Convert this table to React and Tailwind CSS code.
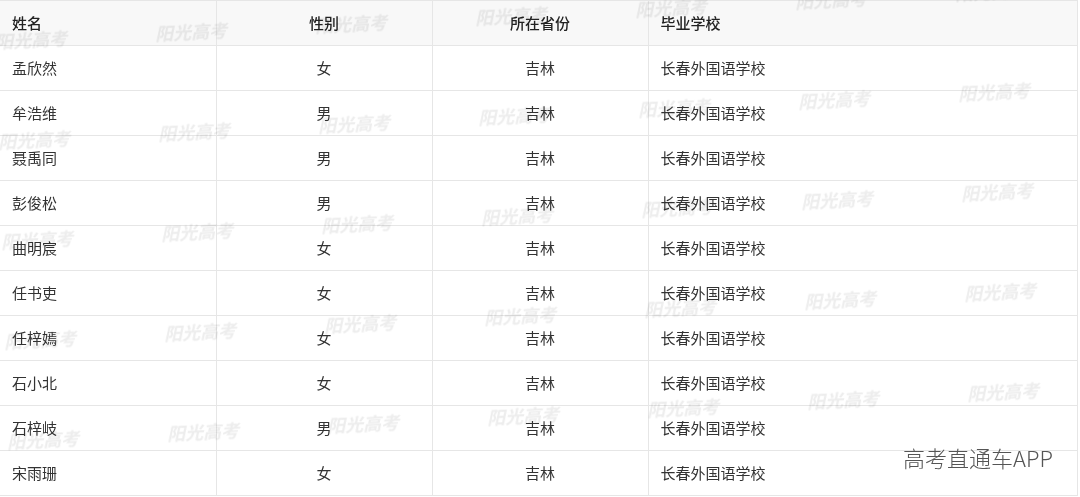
import React from 'react';

const rows = [
  ['孟欣然', '女'],
  ['牟浩维', '男'],
  ['聂禹同', '男'],
  ['彭俊松', '男'],
  ['曲明宸', '女'],
  ['任书吏', '女'],
  ['任梓嫣', '女'],
  ['石小北', '女'],
  ['石梓岐', '男'],
  ['宋雨珊', '女'],
];

// watermark grid: each column steps 160px right and 8px up, each row 100px down
const marks = [];
for (let j = 0; j < 5; j++) {
  for (let i = 0; i < 7; i++) {
    marks.push({ left: -5 + 160 * i + 3 * j, top: 26 + 100 * j - 8 * i });
  }
}

export default function App() {
  return (
    <div
      className="relative w-[1080px] h-[497px] overflow-hidden bg-white text-[#333]"
      style={{ fontFamily: '"Noto Sans CJK SC", "Noto Sans", sans-serif' }}
    >
      <table className="w-[1078px] border-collapse table-fixed text-[15px]">
        <colgroup>
          <col className="w-[216px]" />
          <col className="w-[216px]" />
          <col className="w-[216px]" />
          <col />
        </colgroup>
        <thead>
          <tr className="h-[45px] bg-[#f8f8f8] text-[#222]">
            <th className="border-t border-r border-b border-[#e6e6e6] px-3 text-left font-medium">姓名</th>
            <th className="border-t border-r border-b border-[#e6e6e6] text-center font-medium">性别</th>
            <th className="border-t border-r border-b border-[#e6e6e6] text-center font-medium">所在省份</th>
            <th className="border-t border-r border-b border-[#e6e6e6] px-3 text-left font-medium">毕业学校</th>
          </tr>
        </thead>
        <tbody>
          {rows.map(([name, sex]) => (
            <tr key={name} className="h-[45px]">
              <td className="border-r border-b border-[#e6e6e6] px-3">{name}</td>
              <td className="border-r border-b border-[#e6e6e6] text-center">{sex}</td>
              <td className="border-r border-b border-[#e6e6e6] text-center">吉林</td>
              <td className="border-r border-b border-[#e6e6e6] px-3">长春外国语学校</td>
            </tr>
          ))}
        </tbody>
      </table>

      {marks.map((m, k) => (
        <span
          key={k}
          className="pointer-events-none absolute whitespace-nowrap text-[18px] font-bold italic text-[#ededed] mix-blend-multiply blur-[0.5px] -rotate-3"
          style={{ left: m.left, top: m.top }}
        >
          阳光高考
        </span>
      ))}

      <span className="pointer-events-none absolute left-[903px] top-[441px] text-[22px] font-light text-[#555] whitespace-nowrap">
        高考直通车APP
      </span>
    </div>
  );
}
